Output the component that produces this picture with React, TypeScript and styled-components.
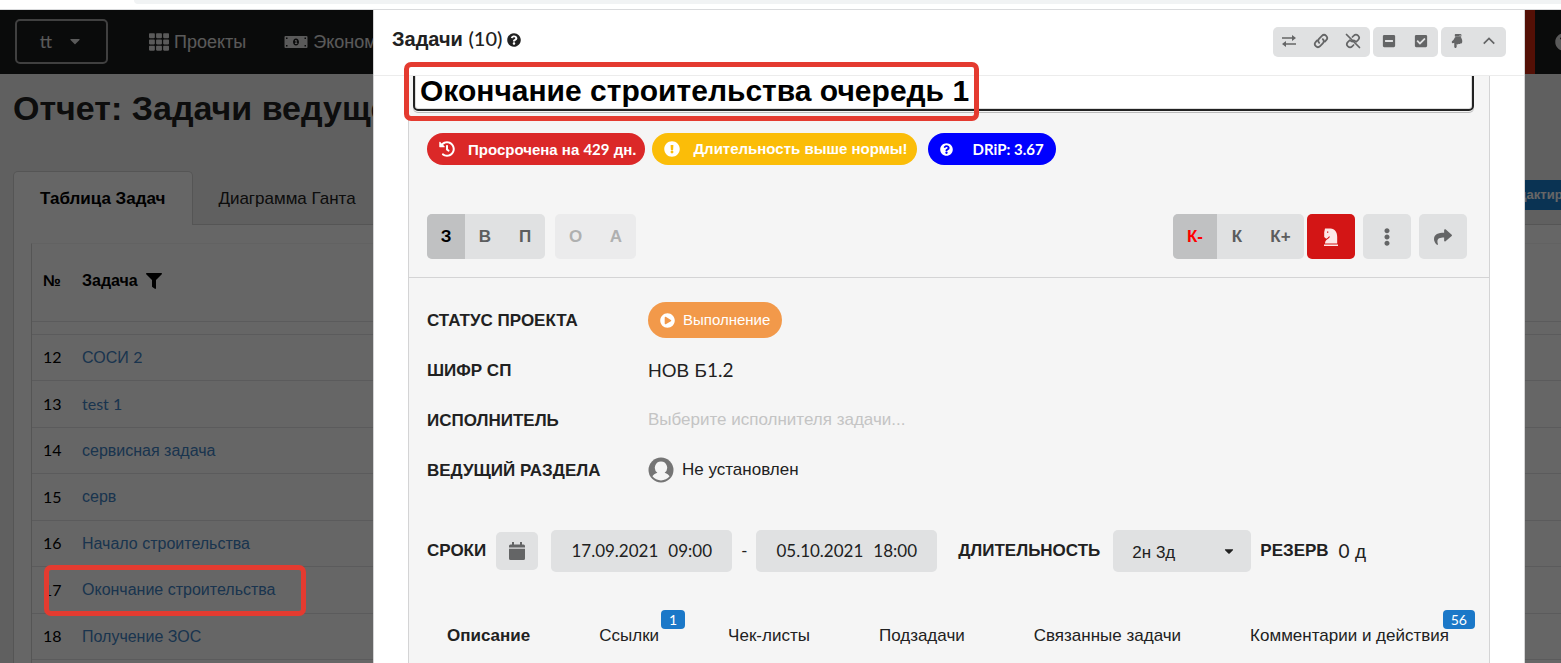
import React from 'react';
import styled, { createGlobalStyle, css } from 'styled-components';
import {
  FaTh, FaQuestionCircle, FaMinusSquare, FaCheckSquare, FaHandPointDown,
  FaHistory, FaExclamationCircle, FaEllipsisV, FaShare, FaPlayCircle, FaFilter, FaCaretDown,
} from 'react-icons/fa';

const cyrillic = '"Liberation Sans", Arial, sans-serif';
const latin = 'Lato, "Liberation Sans", sans-serif';

const GlobalStyle = createGlobalStyle`
  *, *::before, *::after { box-sizing: border-box; }
  body { margin: 0; background: #fff; font: 17px/24px ${cyrillic}; color: #212121; overflow: hidden; }
  button, input, select { font: inherit; color: inherit; margin: 0; }
  button { border: 0; padding: 0; background: none; cursor: pointer; }
  a { text-decoration: none; }
  svg { display: block; flex: none; }
`;

const Num = styled.span<{ $medium?: boolean }>`
  font-family: ${latin};
  font-weight: ${p => (p.$medium ? 500 : 'inherit')};
`;

/* ---------- browser edge ---------- */

const Screen = styled.div`
  height: 100vh;
  display: flex;
  flex-direction: column;
  overflow: hidden;
`;

const BrowserEdge = styled.div`
  flex: none;
  height: 10px;
  border-bottom: 1px solid #d9dadc;
  padding-left: 134px;
`;

const AddressBar = styled.div`
  height: 4px;
  background: #f1f3f4;
  border-bottom-left-radius: 8px;
`;

const Viewport = styled.div`
  position: relative;
  flex: 1;
  min-height: 0;
  overflow: hidden;
`;

/* ---------- page under the dimmer ---------- */

const Page = styled.div`
  height: 100%;
  background: #f0f0f0;
  overflow: hidden;
`;

const NavBar = styled.nav`
  display: flex;
  align-items: center;
  height: 64px;
  padding-left: 15px;
  background: #1b1c1d;
  color: #e0e0e0;
  overflow: hidden;
`;

const OrgButton = styled.button`
  display: flex;
  align-items: center;
  justify-content: center;
  gap: 15px;
  width: 93px;
  height: 45px;
  margin-bottom: 2px;
  border: 2px solid #a0a0a0;
  border-radius: 5px;
  font-family: ${latin};
  font-size: 18px;
`;

const NavLink = styled.a`
  display: flex;
  align-items: center;
  gap: 5px;
  margin-left: 38px;
  font-size: 18px;
  color: inherit;
  &:first-of-type { margin-left: 41px; }
`;

const NavEnd = styled.div`
  display: flex;
  align-items: center;
  align-self: stretch;
  gap: 20px;
  margin-left: auto;
  margin-right: -12px;
`;

const AlertStripe = styled.div`
  align-self: stretch;
  width: 60px;
  background: #d32a10;
`;

const PageTitle = styled.h1`
  margin: 13px 0 0 13px;
  font-size: 34px;
  line-height: 42px;
  white-space: nowrap;
`;

const PageTabs = styled.div`
  display: flex;
  align-items: flex-end;
  height: 54px;
  margin: 42px 0 0 13px;
  box-shadow: inset 0 -1px #d4d4d5;
`;

const PageTab = styled.button<{ $active?: boolean }>`
  height: 54px;
  padding: 2px 25px 0;
  white-space: nowrap;
  ${p => p.$active && css`
    padding: 1px 27px 0 26px;
    background: #fff;
    border: 1px solid #d4d4d5;
    border-bottom: 0;
    border-radius: 5px 5px 0 0;
    font-weight: 700;
    color: #000;
  `}
`;

const EditButton = styled.button`
  align-self: flex-start;
  height: 30px;
  margin: 9px -55px 0 auto;
  padding: 0 16px;
  background: #1b80d0;
  color: #fff;
  font-size: 13px;
  font-weight: 700;
`;

const TabPanel = styled.div`
  margin-left: 13px;
  padding: 18px 0 0 17px;
  border-left: 1px solid #d4d4d5;
  background: #fff;
`;

const TaskTable = styled.table`
  width: 100%;
  border-collapse: separate;
  border-spacing: 0;
  border-left: 1px solid #d4d4d5;
  border-top: 1px solid #f6f6f6;
  table-layout: fixed;
  font-size: 16px;
  color: #000;
  td { height: 46px; border-bottom: 1px solid #e4e4e5; }
  tr:nth-child(odd) td { height: 47px; }
  tr:first-child td { height: 13px; }
  th, td { padding: 0 0 0 12px; white-space: nowrap; }
  th:first-child, td:first-child { width: 38px; padding-left: 11px; }
  thead th { height: 78px; padding-bottom: 4px; text-align: left; border-bottom: 1px solid #e4e4e5; }
  a { color: #4183c4; }
`;

const HeadLabel = styled.span`
  display: flex;
  align-items: center;
  gap: 8px;
`;

/* ---------- modal ---------- */

const Dimmer = styled.div`
  position: absolute;
  inset: 0;
  display: flex;
  padding: 0 36px 0 373px;
  background: rgba(0, 0, 0, 0.6);
`;

const Modal = styled.section`
  flex: 1;
  min-width: 0;
  display: flex;
  flex-direction: column;
  background: #fff;
  border: solid #d4d4d5;
  border-width: 0 1px;
`;

const ModalHeader = styled.header`
  flex: none;
  display: flex;
  align-items: center;
  justify-content: space-between;
  height: 66px;
  padding: 0 18px 2px;
  border-bottom: 1px solid #ececec;
`;

const ModalTitle = styled.h2`
  display: flex;
  align-items: center;
  gap: 5px;
  margin: 0;
  padding-bottom: 6px;
  font-size: 20px;
  line-height: 28px;
  svg { margin-top: 2px; }
`;

const Toolbar = styled.div`
  display: flex;
  gap: 3px;
`;

const ToolGroup = styled.div`
  display: flex;
  height: 30px;
  padding-right: 1px;
  border-radius: 5px;
  background: #e0e1e2;
`;

const ToolButton = styled.button`
  display: grid;
  place-items: center;
  width: 32px;
  padding-bottom: 2px;
  color: #646566;
`;

const ModalBody = styled.div`
  flex: 1;
  min-height: 0;
  padding: 0 34px;
  overflow: hidden;
`;

const Card = styled.article`
  display: flow-root;
  min-height: 100%;
  background: #f5f5f5;
  border: solid #d4d4d5;
  border-width: 0 1px;
`;

const CardTop = styled.div`
  padding: 0 22px 18px 18px;
  border-bottom: 1px solid #d4d4d5;
`;

const TitleRow = styled.div`
  display: flex;
  margin: -9px -7px 0 -14px;
`;

const TitleInput = styled.input`
  flex: 1;
  min-width: 0;
  height: 44px;
  padding: 4px 5px 0;
  border: 2px solid #222;
  border-radius: 5px;
  outline: 0;
  background: #fff;
  box-shadow: inset 0 0 0 1px #ddd, 0 1px #f5f5f5, 0 2px #bbb;
  font-size: 30px;
  font-weight: 700;
  color: #000;
`;

const Pills = styled.div`
  display: flex;
  gap: 7px;
  margin-top: 22px;
`;

const Pill = styled.span<{ $color: string; $wide?: boolean }>`
  display: flex;
  align-items: center;
  gap: ${p => (p.$wide ? 20 : 13)}px;
  height: 32px;
  margin-left: ${p => (p.$wide ? 4 : 0)}px;
  padding: 0 ${p => (p.$wide ? 12 : 9)}px 0 12px;
  border-radius: 16px;
  background: ${p => p.$color};
  color: #fff;
  font-size: 15px;
  font-weight: 700;
  white-space: nowrap;
`;

const Actions = styled.div`
  display: flex;
  justify-content: space-between;
  margin-top: 49px;
`;

const ActionSide = styled.div<{ $gap: number }>`
  display: flex;
  gap: ${p => p.$gap}px;
`;

const ButtonGroup = styled.div<{ $disabled?: boolean }>`
  display: flex;
  height: 45px;
  border-radius: 5px;
  overflow: hidden;
  background: #e0e1e2;
  opacity: ${p => (p.$disabled ? 0.45 : 1)};
  & + button { margin-left: -5px; }
`;

const Segment = styled.button<{ $active?: boolean; $width?: number; $red?: boolean }>`
  width: ${p => p.$width ?? 40}px;
  font-weight: 700;
  background: ${p => (p.$active ? '#c0c1c2' : 'transparent')};
  color: ${p => (p.$red ? '#f00' : p.$active ? '#000' : '#5c5d5e')};
`;

const IconButton = styled.button<{ $danger?: boolean }>`
  display: grid;
  place-items: center;
  width: 48px;
  height: 45px;
  border-radius: 5px;
  background: ${p => (p.$danger ? '#d31515' : '#e0e1e2')};
  color: ${p => (p.$danger ? '#fde8e8' : '#646566')};
`;

const Fields = styled.dl`
  display: grid;
  grid-template-columns: 221px 1fr;
  grid-auto-rows: 50px;
  align-items: center;
  margin: 17px 0 0;
  padding: 0 18px;
  dt { padding-top: 2px; font-weight: 700; }
  dd { margin: 0; display: flex; align-items: center; gap: 8px; }
`;

const LargeValue = styled.span`
  font-size: 19px;
`;

const StatusPill = styled.span`
  display: flex;
  align-items: center;
  gap: 8px;
  height: 36px;
  padding: 0 12px;
  border-radius: 18px;
  background: #f2994a;
  color: #fff;
  font-size: 15px;
`;

const AssigneeInput = styled.input`
  width: 100%;
  padding: 0;
  border: 0;
  outline: 0;
  background: none;
  &::placeholder { color: #c4c4c4; opacity: 1; }
`;

const Schedule = styled.div`
  display: flex;
  align-items: center;
  margin-top: 35px;
  padding-left: 18px;
  white-space: nowrap;
`;

const Caption = styled.span<{ $before?: number; $after: number }>`
  margin-left: ${p => p.$before ?? 0}px;
  margin-right: ${p => p.$after}px;
  font-weight: 700;
`;

const CalendarButton = styled.button`
  display: grid;
  place-items: center;
  width: 42px;
  height: 38px;
  margin-right: 13px;
  border-radius: 5px;
  background: #e0e1e2;
  color: #646566;
`;

const DateButton = styled.button`
  display: flex;
  justify-content: center;
  align-items: center;
  gap: 10px;
  width: 181px;
  height: 42px;
  border-radius: 5px;
  background: #e0e1e2;
  font-family: ${latin};
`;

const Dash = styled.span`
  width: 24px;
  text-align: center;
`;

const SelectBox = styled.label`
  display: grid;
  align-items: center;
  > * { grid-area: 1 / 1; }
  svg { justify-self: end; margin-right: 15px; pointer-events: none; }
`;

const DurationSelect = styled.select`
  appearance: none;
  width: 138px;
  height: 42px;
  padding: 3px 19px 0;
  border: 0;
  border-radius: 5px;
  background: #e0e1e2;
`;

const DetailTabs = styled.div`
  display: flex;
  gap: 69px;
  margin-top: 52px;
  padding-left: 38px;
  white-space: nowrap;
`;

const DetailTab = styled.button<{ $active?: boolean }>`
  position: relative;
  line-height: 24px;
  font-weight: ${p => (p.$active ? 700 : 400)};
`;

const Badge = styled.span`
  position: absolute;
  top: -14px;
  right: -26px;
  padding: 0 8px;
  border-radius: 4px;
  background: #1b78c8;
  color: #fff;
  font: 14px/19px ${latin};
`;

/* ---------- marker frames drawn over the page ---------- */

const Marker = styled.div<{ $x: number; $y: number; $w: number; $h: number }>`
  position: absolute;
  left: ${p => p.$x}px;
  top: ${p => p.$y}px;
  width: ${p => p.$w}px;
  height: ${p => p.$h}px;
  border: 5px solid #e43b30;
  border-radius: 7px;
  pointer-events: none;
`;

/* ---------- icons ---------- */

const line = { fill: 'none', stroke: 'currentColor', strokeWidth: 2, viewBox: '0 0 16 16' };

const MoneyIcon = () => (
  <svg width="24" height="14" viewBox="0 0 24 14" fill="currentColor">
    <path d="M1.500 1h21a1 1 0 0 1 1 1v10a1 1 0 0 1-1 1h-21a1 1 0 0 1-1-1V2a1 1 0 0 1 1-1zM2 2.500v1.500h1.500V2.500zM20.500 2.500v1.500H22V2.500zM2 10v1.500h1.500V10zM20.500 10v1.500H22V10zM12 3.500c-1.700 0-3 1.600-3 3.500s1.300 3.500 3 3.500 3-1.600 3-3.500-1.300-3.500-3-3.500zM11.200 5h1.500v3h.6v.9h-2.400V8h.6V6h-.6z" fillRule="evenodd" />
  </svg>
);

const ExchangeIcon = () => (
  <svg {...line} width="16" height="16" strokeWidth="1.5">
    <path d="M1 5h11M4 11h11" />
    <path d="M11 2v6l4-3zM5 8v6l-4-3z" fill="currentColor" stroke="none" />
  </svg>
);

const LinkIcon = () => (
  <svg {...line} width="16" height="16" strokeWidth="1.800" strokeLinecap="round">
    <path d="M6.200 9.800a3 3 0 0 1 0-4.200l2.700-2.700a3 3 0 0 1 4.300 4.300l-1.300 1.300" />
    <path d="M9.800 6.200a3 3 0 0 1 0 4.200l-2.700 2.700a3 3 0 0 1-4.300-4.300l1.300-1.300" />
  </svg>
);

const UnlinkIcon = () => (
  <svg {...line} width="16" height="16" strokeWidth="1.700" strokeLinecap="round">
    <path d="M1.500 1.500l13 13" />
    <path d="M7.400 4l1.400-1.300a3 3 0 0 1 4.400 4.200L11.300 8.800 8.600 7.300" />
    <path d="M8.600 12l-1.400 1.300a3 3 0 0 1-4.400-4.200L4.700 7.200 7.400 8.700" />
  </svg>
);

const AngleUpIcon = () => (
  <svg {...line} width="14" height="14">
    <path d="M2 11l6-6 6 6" />
  </svg>
);

const KnightIcon = () => (
  <svg width="18" height="20" viewBox="0 0 18 20" fill="currentColor">
    <path d="M2 17.500h14V19H2zM3 16.500c0-2.600 1.400-3.600 3.400-4.900 1-.7 1.400-1.500 1.400-2.300-1 .3-1.500.8-2 1.500l-1.600.9L2.200 10V5.200L3 1.500h5.500c4.300.3 6.700 3.500 6.700 8.500v6.500zM5 4.500v1.300h1.300V4.500z" fillRule="evenodd" />
  </svg>
);

const CalendarIcon = () => (
  <svg width="18" height="20" viewBox="0 0 18 20" fill="currentColor">
    <path d="M4 1h2v2.500h6V1h2v2.500h1.500A1.500 1.500 0 0 1 17 5v1.500H1V5a1.500 1.500 0 0 1 1.500-1.500H4zM1 7.700h16v9.800a1.500 1.500 0 0 1-1.500 1.500h-13A1.500 1.500 0 0 1 1 17.500z" />
  </svg>
);

const UserIcon = () => (
  <svg width="26" height="26" viewBox="0 0 26 26">
    <circle cx="13" cy="13" r="12.500" fill="#757575" />
    <path d="M13 4.500a6.200 6.200 0 0 1 3.600 11.200c2.600.8 4 1.900 5 3.600a11 11 0 0 1-17.200 0c1-1.700 2.400-2.800 5-3.600A6.200 6.200 0 0 1 13 4.500z" fill="#f5f5f5" />
  </svg>
);

/* ---------- data ---------- */

const tasks: [number, React.ReactNode][] = [
  [12, <>СОСИ <Num>2</Num></>],
  [13, <Num>test 1</Num>],
  [14, 'сервисная задача'],
  [15, 'серв'],
  [16, 'Начало строительства'],
  [17, 'Окончание строительства'],
  [18, 'Получение ЗОС'],
];

const detailTabs: { label: string; badge?: number }[] = [
  { label: 'Описание' },
  { label: 'Ссылки', badge: 1 },
  { label: 'Чек-листы' },
  { label: 'Подзадачи' },
  { label: 'Связанные задачи' },
  { label: 'Комментарии и действия', badge: 56 },
];

const ReportPage = () => (
  <Page>
    <NavBar>
      <OrgButton>tt <FaCaretDown size={16} /></OrgButton>
      <NavLink href="#projects"><FaTh size={20} /> Проекты</NavLink>
      <NavLink href="#economy"><MoneyIcon /> Экономика</NavLink>
      <NavEnd>
        <AlertStripe />
        <FaQuestionCircle size={18} />
      </NavEnd>
    </NavBar>
    <PageTitle>Отчет: Задачи ведущего</PageTitle>
    <PageTabs>
      <PageTab $active>Таблица Задач</PageTab>
      <PageTab>Диаграмма Ганта</PageTab>
      <EditButton>Редактировать</EditButton>
    </PageTabs>
    <TabPanel>
      <TaskTable>
        <thead>
          <tr>
            <th>№</th>
            <th><HeadLabel>Задача <FaFilter size={16} /></HeadLabel></th>
          </tr>
        </thead>
        <tbody>
          <tr><td /><td /></tr>
          {tasks.map(([id, name]) => (
            <tr key={id}>
              <td><Num>{id}</Num></td>
              <td><a href={`#task-${id}`}>{name}</a></td>
            </tr>
          ))}
          <tr><td /><td /></tr>
        </tbody>
      </TaskTable>
    </TabPanel>
  </Page>
);

const TaskModal = () => (
  <Modal role="dialog" aria-label="Задачи">
    <ModalHeader>
      <ModalTitle><span>Задачи <Num $medium>(10)</Num></span> <FaQuestionCircle size={14} /></ModalTitle>
      <Toolbar>
        <ToolGroup>
          <ToolButton aria-label="Обмен"><ExchangeIcon /></ToolButton>
          <ToolButton aria-label="Связать"><LinkIcon /></ToolButton>
          <ToolButton aria-label="Разорвать связь"><UnlinkIcon /></ToolButton>
        </ToolGroup>
        <ToolGroup>
          <ToolButton aria-label="Свернуть"><FaMinusSquare size={14} /></ToolButton>
          <ToolButton aria-label="Отметить"><FaCheckSquare size={14} /></ToolButton>
        </ToolGroup>
        <ToolGroup>
          <ToolButton aria-label="Вниз"><FaHandPointDown size={14} /></ToolButton>
          <ToolButton aria-label="Вверх"><AngleUpIcon /></ToolButton>
        </ToolGroup>
      </Toolbar>
    </ModalHeader>
    <ModalBody>
      <Card>
        <CardTop>
          <TitleRow>
            <TitleInput aria-label="Название задачи" defaultValue="Окончание строительства очередь 1" />
          </TitleRow>
          <Pills>
            <Pill $color="#db2828"><FaHistory size={16} /><span>Просрочена на <Num>429</Num> дн.</span></Pill>
            <Pill $color="#fbbd08"><FaExclamationCircle size={16} />Длительность выше нормы!</Pill>
            <Pill $color="#0000ff" $wide><FaQuestionCircle size={13} /><Num>DRiP: 3.67</Num></Pill>
          </Pills>
          <Actions>
            <ActionSide $gap={10}>
              <ButtonGroup>
                <Segment $active $width={38}>З</Segment>
                <Segment>В</Segment>
                <Segment>П</Segment>
              </ButtonGroup>
              <ButtonGroup $disabled>
                <Segment disabled $width={41}>О</Segment>
                <Segment disabled>А</Segment>
              </ButtonGroup>
            </ActionSide>
            <ActionSide $gap={8}>
              <ButtonGroup>
                <Segment $active $red $width={44}>К-</Segment>
                <Segment>К</Segment>
                <Segment $width={47}>К+</Segment>
              </ButtonGroup>
              <IconButton $danger aria-label="Стратегия"><KnightIcon /></IconButton>
              <IconButton aria-label="Ещё"><FaEllipsisV size={18} /></IconButton>
              <IconButton aria-label="Поделиться"><FaShare size={18} /></IconButton>
            </ActionSide>
          </Actions>
        </CardTop>
        <Fields>
          <dt>СТАТУС ПРОЕКТА</dt>
          <dd><StatusPill><FaPlayCircle size={15} />Выполнение</StatusPill></dd>
          <dt>ШИФР СП</dt>
          <dd><LargeValue>НОВ Б<Num>1.2</Num></LargeValue></dd>
          <dt><label htmlFor="assignee">ИСПОЛНИТЕЛЬ</label></dt>
          <dd><AssigneeInput id="assignee" placeholder="Выберите исполнителя задачи..." /></dd>
          <dt>ВЕДУЩИЙ РАЗДЕЛА</dt>
          <dd><UserIcon />Не установлен</dd>
        </Fields>
        <Schedule>
          <Caption $after={10}>СРОКИ</Caption>
          <CalendarButton aria-label="Календарь"><CalendarIcon /></CalendarButton>
          <DateButton><span>17.09.2021</span><span>09:00</span></DateButton>
          <Dash>-</Dash>
          <DateButton><span>05.10.2021</span><span>18:00</span></DateButton>
          <Caption $before={21} $after={13}>ДЛИТЕЛЬНОСТЬ</Caption>
          <SelectBox>
            <DurationSelect aria-label="Длительность"><option>2н 3д</option></DurationSelect>
            <FaCaretDown size={14} />
          </SelectBox>
          <Caption $before={9} $after={10}>РЕЗЕРВ</Caption>
          <LargeValue><Num>0</Num> д</LargeValue>
        </Schedule>
        <DetailTabs>
          {detailTabs.map((tab, i) => (
            <DetailTab key={tab.label} $active={i === 0}>
              {tab.label}
              {tab.badge && <Badge>{tab.badge}</Badge>}
            </DetailTab>
          ))}
        </DetailTabs>
      </Card>
    </ModalBody>
  </Modal>
);

export default function App() {
  return (
    <Screen>
      <GlobalStyle />
      <BrowserEdge><AddressBar /></BrowserEdge>
      <Viewport>
        <ReportPage />
        <Dimmer><TaskModal /></Dimmer>
        <Marker $x={44} $y={555} $w={262} $h={51} />
        <Marker $x={404} $y={52} $w={575} $h={59} />
      </Viewport>
    </Screen>
  );
}
